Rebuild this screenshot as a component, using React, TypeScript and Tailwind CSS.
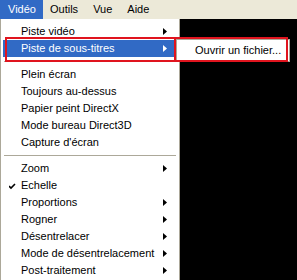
const font = { fontFamily: '"Liberation Sans", Arial, sans-serif' };

type Item = { label: string; arrow?: boolean; check?: boolean; active?: boolean } | 'sep';

const items: Item[] = [
  { label: 'Piste vidéo', arrow: true },
  { label: 'Piste de sous-titres', arrow: true, active: true },
  'sep',
  { label: 'Plein écran' },
  { label: 'Toujours au-dessus' },
  { label: 'Papier peint DirectX' },
  { label: 'Mode bureau Direct3D' },
  { label: "Capture d'écran" },
  'sep',
  { label: 'Zoom', arrow: true },
  { label: 'Echelle', check: true },
  { label: 'Proportions', arrow: true },
  { label: 'Rogner', arrow: true },
  { label: 'Désentrelacer', arrow: true },
  { label: 'Mode de désentrelacement', arrow: true },
  { label: 'Post-traitement', arrow: true },
];

function Arrow({ white }: { white?: boolean }) {
  return (
    <svg width="4" height="7" viewBox="0 0 4 7" className="shrink-0">
      <path d="M0 0 L4 3.5 L0 7 Z" fill={white ? '#fff' : '#000'} />
    </svg>
  );
}

export default function App() {
  return (
    <div className="relative w-[297px] h-[280px] overflow-hidden bg-black text-[11px] text-black" style={font}>
      <div className="flex h-[19px] bg-[#ece9d8] items-stretch">
        <div className="bg-[#316ac5] text-white px-[8px] flex items-center w-[43px]">Vidéo</div>
        <div className="px-[7px] flex items-center">Outils</div>
        <div className="px-[8px] flex items-center">Vue</div>
        <div className="px-[7px] flex items-center">Aide</div>
      </div>
      <div className="flex">
        <div className="w-[180px] bg-white border-l border-l-[#aca899] border-r border-r-[#aca899] pt-[4px] pb-[2px] pl-[2px] pr-[2px]">
          {items.map((it, i) =>
            it === 'sep' ? (
              <div key={i} className="h-[9px] flex items-center px-[1px]">
                <div className="h-px w-full bg-[#aca899]" />
              </div>
            ) : (
              <div
                key={i}
                className={`h-[17px] flex items-center pl-[18px] pr-[10px] ${it.active ? 'bg-[#316ac5] text-white' : ''}`}
              >
                <div className="w-0 relative">
                  {it.check && (
                    <svg width="7" height="7" viewBox="0 0 7 7" className="absolute left-[-12px] top-[-3px]">
                      <path d="M0 3 L2 5 L6 1" stroke="#000" strokeWidth="1.6" fill="none" />
                    </svg>
                  )}
                </div>
                <span className="flex-1 whitespace-nowrap">{it.label}</span>
                {it.arrow && <Arrow white={it.active} />}
              </div>
            ),
          )}
        </div>
        <div className="flex-1 bg-black" />
      </div>
      {/* submenu */}
      <div className="absolute left-[176px] top-[39px] w-[114px] h-[23px] bg-white border border-[#aca899] flex items-center pl-[18px] whitespace-nowrap">
        Ouvrir un fichier...
      </div>
      {/* red annotation boxes */}
      <div className="absolute left-[5px] top-[37px] w-[171px] h-[25px] border-2 border-[#e0141e]" />
      <div className="absolute left-[174px] top-[37px] w-[114px] h-[25px] border-2 border-[#e0141e]" />
    </div>
  );
}
